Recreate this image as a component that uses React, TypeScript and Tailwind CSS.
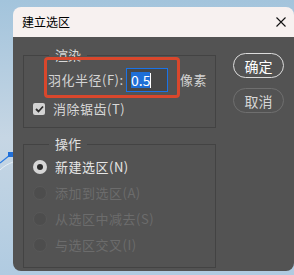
export default function App() {
  const options = [
    { label: "新建选区", key: "(N)", active: true },
    { label: "添加到选区", key: "(A)", active: false },
    { label: "从选区中减去", key: "(S)", active: false },
    { label: "与选区交叉", key: "(I)", active: false },
  ];

  return (
    <div className="relative w-[294px] h-[275px] overflow-hidden bg-gradient-to-b from-[#a3c4dc] via-[#c6d6e4] to-[#b0cbe1] font-['Noto_Sans_CJK_SC',sans-serif]">
      {/* bits of the canvas peeking out behind the dialog */}
      <svg className="absolute left-0 top-[140px]" width="14" height="40" viewBox="0 0 14 40">
        <path d="M0 23 L10 15" stroke="#2a7ae2" strokeWidth="1.2" fill="none" />
        <path d="M0 30 C4 26 8 24 13 22" stroke="#e6eef6" strokeWidth="1" fill="none" />
        <rect x="8" y="12" width="5" height="5" fill="#1f6fd9" />
      </svg>

      <div className="relative ml-[13px] mt-[7px] w-[281px] h-[264px] rounded-lg overflow-hidden flex flex-col">
        <div className="h-[30px] shrink-0 bg-[#f7f1f0] flex items-center justify-between pl-[9px] pr-[8px]">
          <span className="text-[12px] leading-[14px] text-black">建立选区</span>
          <svg width="10" height="10" viewBox="0 0 10 10">
            <path d="M0.5 0.5 L9.5 9.5 M9.5 0.5 L0.5 9.5" stroke="#111" strokeWidth="1.1" />
          </svg>
        </div>

        <div className="flex-1 bg-[#535353] flex items-start pl-[10px] pt-[10px]">
          <div className="w-[193px] flex flex-col gap-[8px]">
            <fieldset className="border border-[#434343] pl-[9px] pt-[5px] pb-[10px]">
              <legend className="ml-[16px] px-[6px] text-[13px] leading-[16px] text-[#d8d8d8]">渲染</legend>
              <div className="flex items-center ml-[15px] h-[24px]">
                <span className="w-[78px] text-[13px] tracking-[0.5px] text-[#d4d4d4]">羽化半径(F):</span>
                <div className="w-[42px] h-[24px] border border-[#1a73e8] bg-[#474747] pl-[4px] flex items-center">
                  <span className="bg-[#1f6fd6] text-white text-[14px] leading-[16px]">0.5</span>
                  <span className="w-[1px] h-[15px] bg-white" />
                </div>
                <span className="ml-[12px] text-[13px] tracking-[0.5px] text-[#d4d4d4]">像素</span>
              </div>
              <div className="flex items-center mt-[9px] h-[16px]">
                <span className="w-[12px] h-[12px] rounded-[2px] bg-[#d3d3d3] flex items-center justify-center">
                  <svg width="9" height="8" viewBox="0 0 9 8">
                    <path d="M1 4 L3.5 6.5 L8 1.5" stroke="#2e2e2e" strokeWidth="1.8" fill="none" />
                  </svg>
                </span>
                <span className="ml-[8px] text-[13px] tracking-[0.5px] text-[#d8d8d8]">消除锯齿(T)</span>
              </div>
            </fieldset>

            <fieldset className="border border-[#434343] pl-[9px] pt-[2px] pb-[9px]">
              <legend className="ml-[16px] px-[6px] text-[13px] leading-[16px] text-[#e0e0e0]">操作</legend>
              {options.map((o) => (
                <div key={o.label} className="flex items-center h-[26px]">
                  {o.active ? (
                    <span className="w-[14px] h-[14px] rounded-full bg-[#d6d6d6] flex items-center justify-center">
                      <span className="w-[6px] h-[6px] rounded-full bg-[#2b2b2b]" />
                    </span>
                  ) : (
                    <span className="w-[14px] h-[14px] rounded-full bg-[#4d4d4d] border border-[#585858]" />
                  )}
                  <span
                    className={
                      o.active
                        ? "ml-[8px] text-[13px] tracking-[0.5px] text-[#e6e6e6]"
                        : "ml-[8px] text-[13px] tracking-[0.5px] text-[#6c6c6c]"
                    }
                  >
                    {o.label}
                    {o.key}
                  </span>
                </div>
              ))}
            </fieldset>
          </div>

          <div className="ml-[17px] mt-[6px] flex flex-col gap-[10px]">
            <button className="w-[51px] h-[25px] rounded-full border-[1.5px] border-[#dcdcdc] text-white text-[14px] leading-[16px]">
              确定
            </button>
            <button className="w-[51px] h-[25px] rounded-full border-[1.5px] border-[#6f6f6f] text-[#d6d6d6] text-[14px] leading-[16px]">
              取消
            </button>
          </div>
        </div>
      </div>

      {/* red highlight annotation */}
      <div className="absolute left-[44px] top-[57px] w-[136px] h-[41px] border-[3px] border-[#d9472c] rounded-[4px]" />
    </div>
  );
}
